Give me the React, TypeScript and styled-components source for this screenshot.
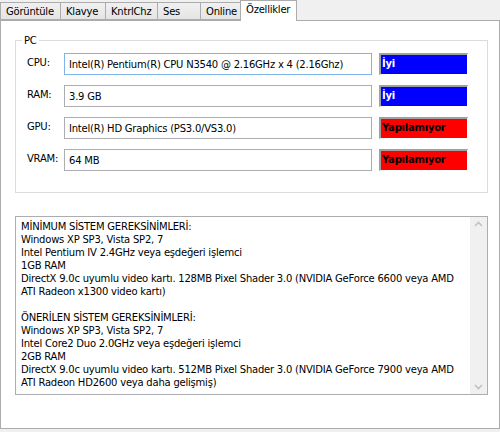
import React from 'react'
import styled, { createGlobalStyle } from 'styled-components'

const GlobalStyle = createGlobalStyle`
  html, body {
    margin: 0;
    padding: 0;
    background: #f0f0f0;
  }
  body {
    font-family: 'DejaVu Sans', 'Liberation Sans', sans-serif;
    font-size: 10px;
    letter-spacing: -0.22px;
    color: #000;
  }
`

const Window = styled.div`
  width: 500px;
  height: 432px;
  display: flex;
  flex-direction: column;
  background: #f0f0f0;
`

const TabStrip = styled.div`
  display: flex;
  align-items: flex-end;
  height: 20px;
  position: relative;
  z-index: 1;
`

const Tab = styled.div<{ $active?: boolean; $width: number }>`
  box-sizing: border-box;
  width: ${({ $width }) => $width}px;
  height: ${({ $active }) => ($active ? 21 : 18)}px;
  margin-bottom: ${({ $active }) => ($active ? -1 : 0)}px;
  margin-right: -1px;
  border: 1px solid #acacac;
  border-bottom: ${({ $active }) => ($active ? 'none' : '1px solid #acacac')};
  background: ${({ $active }) =>
    $active ? '#ffffff' : 'linear-gradient(#f0f0f0, #e5e5e5)'};
  display: flex;
  align-items: center;
  padding: 0 0 ${({ $active }) => ($active ? 3 : 0)}px 5px;
  font-size: 10px;
  white-space: nowrap;
  position: relative;
  z-index: ${({ $active }) => ($active ? 2 : 1)};
`

const Page = styled.div`
  box-sizing: border-box;
  width: 500px;
  height: 409px;
  border: 1px solid #acacac;
  background: #fff;
  padding: 19px 11px 0 14px;
  display: flex;
  flex-direction: column;
`

const Group = styled.fieldset`
  box-sizing: border-box;
  margin: -6px 0 0 0;
  width: 473px;
  height: 159px;
  border: 1px solid #dcdcdc;
  padding: 6px 0 0 11px;
  display: flex;
  flex-direction: column;
  gap: 10px;
`

const Legend = styled.legend`
  padding: 0 2px;
  margin-left: -5px;
  font-size: 10px;
  line-height: 13px;
`

const Row = styled.div`
  display: flex;
  align-items: flex-start;
  height: 22px;
`

const Label = styled.div`
  width: 37px;
  padding-top: 3px;
  line-height: 13px;
`

const ValueBox = styled.div<{ $focused?: boolean }>`
  box-sizing: border-box;
  width: 308px;
  height: 22px;
  border: 1px solid ${({ $focused }) => ($focused ? '#7eb4ea' : '#abadb3')};
  padding: 0 0 0 4px;
  display: flex;
  align-items: center;
  white-space: nowrap;
  overflow: hidden;
`

const Status = styled.div<{ $ok: boolean }>`
  box-sizing: border-box;
  width: 89px;
  height: 22px;
  margin-left: 7px;
  border-top: 2px solid #a0a0a0;
  border-left: 2px solid #a0a0a0;
  border-right: 1px solid #fff;
  border-bottom: 1px solid #fff;
  background: ${({ $ok }) => ($ok ? '#0000ff' : '#ff0000')};
  color: ${({ $ok }) => ($ok ? '#fff' : '#000')};
  font-weight: bold;
  padding: 2px 0 0 1px;
  line-height: 13px;
  white-space: nowrap;
`

const Requirements = styled.div`
  box-sizing: border-box;
  width: 473px;
  height: 179px;
  margin-top: 23px;
  border: 1px solid #abadb3;
  display: flex;
`

const ReqText = styled.div`
  flex: 1;
  padding: 3px 0 0 5px;
  line-height: 13px;
  white-space: pre;
  overflow: hidden;
`

const ScrollBar = styled.div`
  width: 17px;
  background: #f0f0f0;
  display: flex;
  flex-direction: column;
  justify-content: space-between;
  align-items: center;
  padding: 4px 0;
`

const Chevron = ({ up }: { up?: boolean }) => (
  <svg width="9" height="6" viewBox="0 0 9 6">
    <path
      d={up ? 'M1 5 L4.5 1.5 L8 5' : 'M1 1 L4.5 4.5 L8 1'}
      fill="none"
      stroke="#c2c2c2"
      strokeWidth="1.6"
    />
  </svg>
)

const tabs = [
  { name: 'Görüntüle', width: 61 },
  { name: 'Klavye', width: 46 },
  { name: 'KntrlChz', width: 53 },
  { name: 'Ses', width: 44 },
  { name: 'Online', width: 41 },
  { name: 'Özellikler', width: 57, active: true },
]

const specs = [
  { label: 'CPU:', value: 'Intel(R) Pentium(R) CPU N3540 @ 2.16GHz x 4 (2.16Ghz)', ok: true, focused: true },
  { label: 'RAM:', value: '3.9 GB', ok: true },
  { label: 'GPU:', value: 'Intel(R) HD Graphics (PS3.0/VS3.0)', ok: false },
  { label: 'VRAM:', value: '64 MB', ok: false },
]

const requirements = `MİNİMUM SİSTEM GEREKSİNİMLERİ:
Windows XP SP3, Vista SP2, 7
Intel Pentium IV 2.4GHz veya eşdeğeri işlemci
1GB RAM
DirectX 9.0c uyumlu video kartı. 128MB Pixel Shader 3.0 (NVIDIA GeForce 6600 veya AMD
ATI Radeon x1300 video kartı)

ÖNERİLEN SİSTEM GEREKSİNİMLERİ:
Windows XP SP3, Vista SP2, 7
Intel Core2 Duo 2.0GHz veya eşdeğeri işlemci
2GB RAM
DirectX 9.0c uyumlu video kartı. 512MB Pixel Shader 3.0 (NVIDIA GeForce 7900 veya AMD
ATI Radeon HD2600 veya daha gelişmiş)`

const App: React.FC = () => (
  <>
    <GlobalStyle />
    <Window>
      <TabStrip>
        {tabs.map(({ name, width, active }) => (
          <Tab key={name} $width={width} $active={active}>
            {name}
          </Tab>
        ))}
      </TabStrip>
      <Page>
        <Group>
          <Legend>PC</Legend>
          {specs.map(({ label, value, ok, focused }) => (
            <Row key={label}>
              <Label>{label}</Label>
              <ValueBox $focused={focused}>{value}</ValueBox>
              <Status $ok={ok}>{ok ? 'İyi' : 'Yapılamıyor'}</Status>
            </Row>
          ))}
        </Group>
        <Requirements>
          <ReqText>{requirements}</ReqText>
          <ScrollBar>
            <Chevron up />
            <Chevron />
          </ScrollBar>
        </Requirements>
      </Page>
    </Window>
  </>
)

export default App
